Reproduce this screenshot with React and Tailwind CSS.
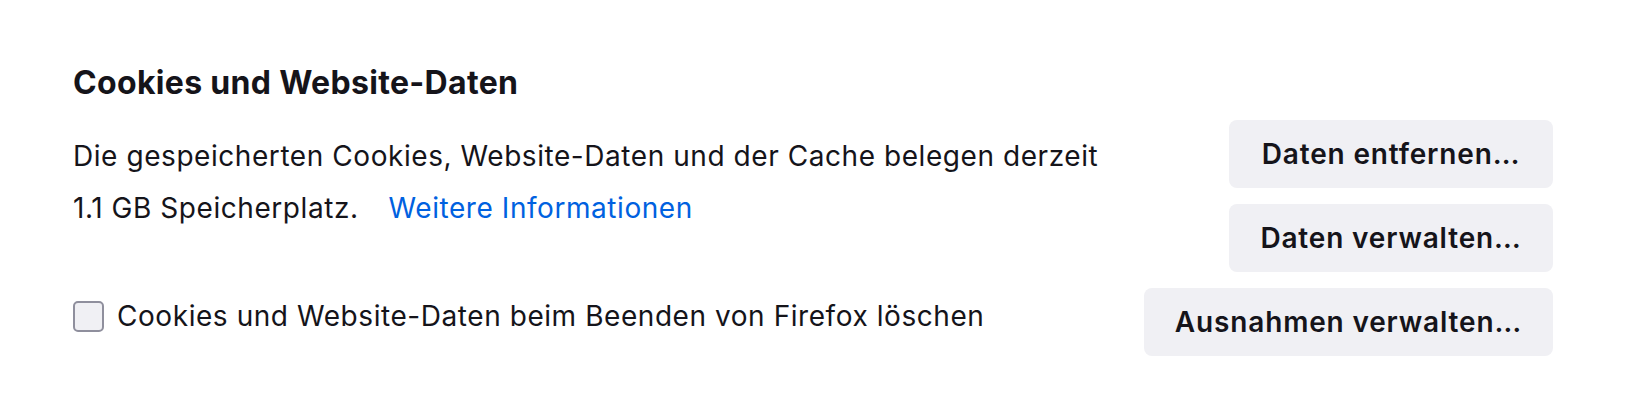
import React from "react";

function Btn({ children, className = "" }) {
  return (
    <button
      className={
        "h-[68px] rounded-[8px] bg-[#f0f0f4] text-[28px] font-semibold tracking-[0.03em] text-[#15141a] " +
        className
      }
    >
      {children}
    </button>
  );
}

export default function App() {
  return (
    <div className="w-[1632px] h-[402px] bg-white pl-[73px] pr-[79px] pt-[58px] text-[#15141a] [font-family:Inter,'Noto_Sans',sans-serif]">
      <h2 className="text-[32px] leading-[50px] font-bold tracking-[0.01em]">Cookies und Website-Daten</h2>
      <div className="mt-[12px] flex justify-between">
        <div className="pt-[10px] text-[28px] leading-[52px] tracking-[0.02em]">
          <div>Die gespeicherten Cookies, Website-Daten und der Cache belegen derzeit</div>
          <div>
            1.1 GB Speicherplatz.
            <a className="ml-[30px] text-[#0061e0]">Weitere Informationen</a>
          </div>
        </div>
        <div className="flex flex-col items-end gap-4">
          <Btn className="w-[324px]">Daten entfernen…</Btn>
          <Btn className="w-[324px]">Daten verwalten…</Btn>
        </div>
      </div>
      <div className="mt-4 flex items-center justify-between">
        <label className="mb-[12px] flex items-center gap-[13px] text-[28px] tracking-[0.02em]">
          <span className="block h-[31px] w-[31px] shrink-0 rounded-[5px] border-2 border-[#8f8f9d] bg-[#f0f0f4]" />
          Cookies und Website-Daten beim Beenden von Firefox löschen
        </label>
        <Btn className="px-[31px]">Ausnahmen verwalten…</Btn>
      </div>
    </div>
  );
}
